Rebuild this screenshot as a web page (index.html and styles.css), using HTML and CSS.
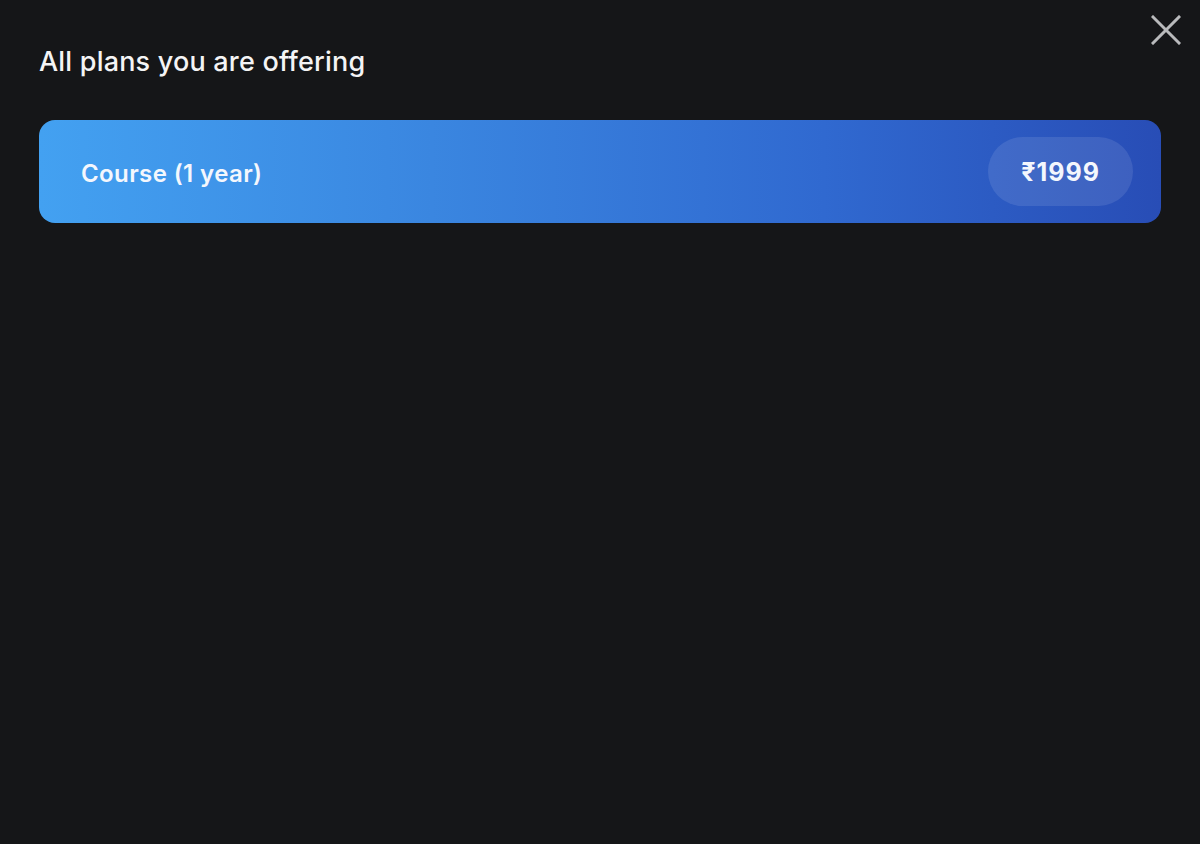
FILE: index.html
```html
<!DOCTYPE html>
<html>
<head>
<meta charset="utf-8">
<link rel="stylesheet" href="styles.css">
</head>
<body>
<div class="modal">
  <button class="close" aria-label="Close">
    <svg width="30" height="30" viewBox="0 0 30 30"><path d="M2 2L28 28M28 2L2 28" stroke="#b9babc" stroke-width="3" stroke-linecap="square"/></svg>
  </button>
  <h1 class="title">All plans you are offering</h1>
  <div class="plans">
    <div class="plan">
      <span class="plan-name">Course (1 year)</span>
      <span class="price">₹1999</span>
    </div>
  </div>
</div>
</body>
</html>
```

FILE: styles.css
```css
html, body {
  margin: 0;
  padding: 0;
  background: #151618;
  height: 100%;
}
body {
  font-family: Inter, "Noto Sans", sans-serif;
  color: #f4f4f5;
}
.modal {
  position: relative;
  padding: 44px 39px 0 39px;
}
.close {
  position: absolute;
  top: 15px;
  right: 19px;
  background: none;
  border: 0;
  padding: 0;
  width: 30px;
  height: 30px;
  display: flex;
}
.title {
  margin: 0;
  font-size: 27px;
  font-weight: 500;
  letter-spacing: 0.2px;
  line-height: 36px;
}
.plans {
  margin-top: 40px;
}
.plan {
  height: 103px;
  border-radius: 16px;
  background: linear-gradient(90deg, #43a1f1 0%, #3a86e0 35%, #3069d0 70%, #284db6 100%);
  display: flex;
  align-items: center;
  justify-content: space-between;
  padding: 0 28px 0 42px;
}
.plan-name {
  font-size: 24px;
  font-weight: 600;
  letter-spacing: 0.4px;
  color: #f4f7fd;
  padding-top: 3px;
}
.price {
  height: 69px;
  border-radius: 35px;
  background: rgba(255, 255, 255, 0.1);
  display: flex;
  align-items: center;
  padding: 0 33px;
  font-size: 25px;
  font-weight: 700;
  letter-spacing: 1px;
  color: #f4f7fd;
}
```
